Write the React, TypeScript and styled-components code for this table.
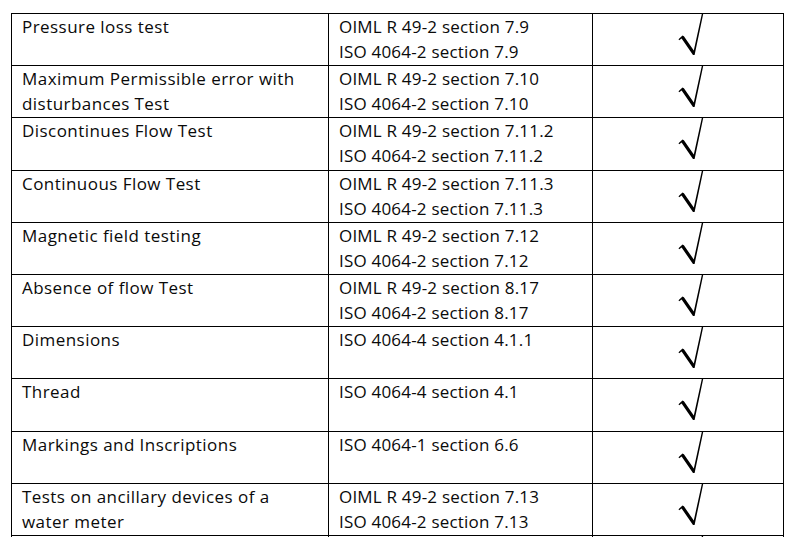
import React from 'react';
import styled, { createGlobalStyle } from 'styled-components';

const GlobalStyle = createGlobalStyle`
  body {
    margin: 0;
    background: #fff;
  }
`;

const Page = styled.div`
  height: 537px;
  overflow: hidden;

  padding: 13px 0 0 11px;
  box-sizing: border-box;

  background: #fff;
`;

const Table = styled.div`
  display: grid;
  grid-template-columns: 317px 264px 192px;
  grid-auto-rows: 52.2px;

  font-family: 'Open Sans', 'Liberation Sans', sans-serif;
  font-size: 17px;
  line-height: 25px;
  color: #0a0a0a;
`;

const Cell = styled.div<{ $last?: boolean; $spacing?: number }>`
  box-sizing: border-box;

  padding: 0 0 0 10px;

  letter-spacing: ${(props) => props.$spacing ?? 0}px;

  border-top: 1px solid #000;
  border-left: 1px solid #000;
  border-right: ${(props) => (props.$last ? '1px solid #000' : 'none')};
`;

const Line = styled.div`
  white-space: nowrap;
`;

const CheckCell = styled(Cell)`
  padding: 0 0 0 85px;
`;

const Check = () => (
  <svg width="26" height="42" viewBox="0 0 26 42">
    <path
      d="M0.5 25.3 L4.5 21.6 L5.9 22.3 L15.8 36.5 L23.8 0 L25.2 0 L16.6 41 L15 41 L3.6 24.5 L1.2 26.2 Z"
      fill="#000"
    />
  </svg>
);

const rows: { test: string[]; refs: string[] }[] = [
  {
    test: ['Pressure loss test'],
    refs: ['OIML R 49-2 section 7.9', 'ISO 4064-2 section 7.9'],
  },
  {
    test: ['Maximum Permissible error with', 'disturbances Test'],
    refs: ['OIML R 49-2 section 7.10', 'ISO 4064-2 section 7.10'],
  },
  {
    test: ['Discontinues Flow Test'],
    refs: ['OIML R 49-2 section 7.11.2', 'ISO 4064-2 section 7.11.2'],
  },
  {
    test: ['Continuous Flow Test'],
    refs: ['OIML R 49-2 section 7.11.3', 'ISO 4064-2 section 7.11.3'],
  },
  {
    test: ['Magnetic field testing'],
    refs: ['OIML R 49-2 section 7.12', 'ISO 4064-2 section 7.12'],
  },
  {
    test: ['Absence of flow Test'],
    refs: ['OIML R 49-2 section 8.17', 'ISO 4064-2 section 8.17'],
  },
  { test: ['Dimensions'], refs: ['ISO 4064-4 section 4.1.1'] },
  { test: ['Thread'], refs: ['ISO 4064-4 section 4.1'] },
  { test: ['Markings and Inscriptions'], refs: ['ISO 4064-1 section 6.6'] },
  {
    test: ['Tests on ancillary devices of a', 'water meter'],
    refs: ['OIML R 49-2 section 7.13', 'ISO 4064-2 section 7.13'],
  },
  // next row of the table, cut off by the bottom of the picture
  { test: [], refs: [] },
];

function App() {
  return (
    <Page>
      <GlobalStyle />
      <Table>
        {rows.map((row, i) => (
          <React.Fragment key={i}>
            <Cell $spacing={0.45}>
              {row.test.map((t) => (
                <Line key={t}>{t}</Line>
              ))}
            </Cell>
            <Cell $spacing={0.2}>
              {row.refs.map((r) => (
                <Line key={r}>{r}</Line>
              ))}
            </Cell>
            <CheckCell $last>
              <Check />
            </CheckCell>
          </React.Fragment>
        ))}
      </Table>
    </Page>
  );
}

export default App;
